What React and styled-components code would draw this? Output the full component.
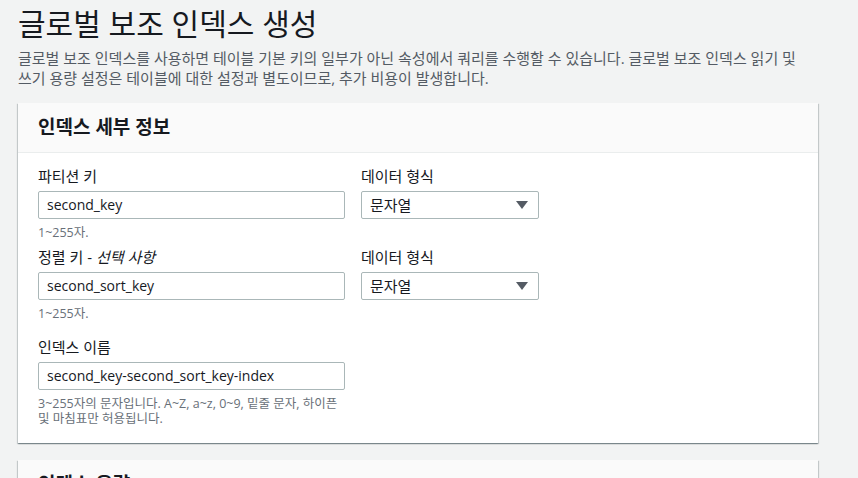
import styled, { createGlobalStyle } from "styled-components"

const Global = createGlobalStyle`
  body {
    margin: 0;
    background: #f2f3f3;
    font-family: "Open Sans", "Noto Sans CJK KR", sans-serif;
    color: #16191f;
  }
`

const Page = styled.div`
  padding: 4px 18px 0 18px;
  width: 800px;
`

const Title = styled.h1`
  margin: 0;
  font-size: 30px;
  font-weight: 400;
  line-height: 40px;
  color: #16191f;
`

const Desc = styled.p`
  margin: 4px 0 15px 0;
  max-width: 790px;
  font-size: 15px;
  line-height: 20px;
  color: #545b64;
`

const Card = styled.section`
  background: #fff;
  box-shadow: 0 1px 1px 0 rgba(0, 28, 36, 0.3), 1px 1px 1px 0 rgba(0, 28, 36, 0.15),
    -1px 1px 1px 0 rgba(0, 28, 36, 0.15);
  margin-bottom: 17px;
`

const CardHeader = styled.div`
  background: #fafafa;
  border-bottom: 1px solid #eaeded;
  padding: 12px 20px;
  height: 25px;
  font-size: 19px;
  font-weight: 700;
  line-height: 25px;
`

const CardBody = styled.div`
  padding: 12px 20px 17px 20px;
  display: flex;
  flex-direction: column;
`

const Row = styled.div`
  display: flex;
  gap: 16px;
  align-items: flex-start;
  margin-top: ${(p) => p.top || 0}px;
`

const Field = styled.div`
  display: flex;
  flex-direction: column;
  width: ${(p) => p.w}px;
`

const Label = styled.div`
  font-size: 15px;
  line-height: 22px;
  margin-bottom: 4px;
  color: #16191f;
  em {
    font-style: italic;
  }
`

const Input = styled.div`
  box-sizing: border-box;
  height: 28px;
  border: 1px solid #aab7b8;
  border-radius: 2px;
  background: #fff;
  padding: 0 8px;
  font-size: ${(p) => (p.ko ? 15 : 14)}px;
  line-height: 26px;
  color: #16191f;
  display: flex;
  align-items: center;
  justify-content: space-between;
`

const Caret = styled.span`
  width: 0;
  height: 0;
  border-left: 6px solid transparent;
  border-right: 6px solid transparent;
  border-top: 8px solid #545b64;
  margin-right: 2px;
`

const Hint = styled.div`
  font-size: 12.5px;
  line-height: 15px;
  color: #687078;
  margin-top: 6px;
`

export default function App() {
  return (
    <Page>
      <Global />
      <Title>글로벌 보조 인덱스 생성</Title>
      <Desc>
        글로벌 보조 인덱스를 사용하면 테이블 기본 키의 일부가 아닌 속성에서 쿼리를 수행할 수 있습니다. 글로벌 보조 인덱스 읽기 및
        쓰기 용량 설정은 테이블에 대한 설정과 별도이므로, 추가 비용이 발생합니다.
      </Desc>
      <Card>
        <CardHeader>인덱스 세부 정보</CardHeader>
        <CardBody>
          <Row>
            <Field w={307}>
              <Label>파티션 키</Label>
              <Input>second_key</Input>
              <Hint>1~255자.</Hint>
            </Field>
            <Field w={178}>
              <Label>데이터 형식</Label>
              <Input ko>
                문자열 <Caret />
              </Input>
            </Field>
          </Row>
          <Row top={6}>
            <Field w={307}>
              <Label>
                정렬 키 - <em>선택 사항</em>
              </Label>
              <Input>second_sort_key</Input>
              <Hint>1~255자.</Hint>
            </Field>
            <Field w={178}>
              <Label>데이터 형식</Label>
              <Input ko>
                문자열 <Caret />
              </Input>
            </Field>
          </Row>
          <Row top={15}>
            <Field w={307}>
              <Label>인덱스 이름</Label>
              <Input>second_key-second_sort_key-index</Input>
              <Hint>
                3~255자의 문자입니다. A~Z, a~z, 0~9, 밑줄 문자, 하이픈 및 마침표만 허용됩니다.
              </Hint>
            </Field>
          </Row>
        </CardBody>
      </Card>
      <Card>
        <CardHeader>인덱스 용량</CardHeader>
      </Card>
    </Page>
  )
}
